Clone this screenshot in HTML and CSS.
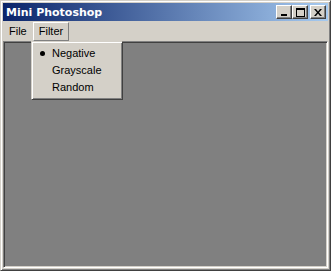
FILE: index.html
```html
<!DOCTYPE html>
<html>
<head>
  <meta charset="UTF-8">
  <title>Mini Photoshop</title>
  <link rel="stylesheet" href="styles.css">
</head>
<body>
  <div class="window">
    <div class="title-bar">
      <span class="title">Mini Photoshop</span>
      <div class="title-buttons">
        <button class="cap-btn min" aria-label="Minimize"><span class="min-bar"></span></button>
        <button class="cap-btn max" aria-label="Maximize"><span class="max-box"></span></button>
        <button class="cap-btn close" aria-label="Close">
          <svg width="8" height="7" viewBox="0 0 8 7"><path d="M0 0h2l2 2.5 2-2.5h2l-3 3.5 3 3.5h-2l-2-2.5-2 2.5h-2l3-3.5z" fill="#000"/></svg>
        </button>
      </div>
    </div>
    <div class="menu-bar">
      <span class="menu-item">File</span>
      <span class="menu-item open">Filter</span>
    </div>
    <div class="client"></div>
    <div class="dropdown">
      <div class="drop-item"><span class="bullet"></span>Negative</div>
      <div class="drop-item">Grayscale</div>
      <div class="drop-item">Random</div>
    </div>
  </div>
</body>
</html>
```

FILE: styles.css
```css
body {
  margin: 0;
  background: #d4d0c8;
  font-family: "Liberation Sans", Arial, sans-serif;
  font-size: 11px;
}
.window {
  position: relative;
  width: 331px;
  height: 271px;
  box-sizing: border-box;
  display: flex;
  flex-direction: column;
  background: #d4d0c8;
  border: 1px solid;
  border-color: #d4d0c8 #404040 #404040 #d4d0c8;
  box-shadow: inset 1px 1px 0 #fff, inset -1px -1px 0 #808080;
  padding: 2px;
}
.title-bar {
  height: 18px;
  display: flex;
  align-items: center;
  justify-content: space-between;
  background: linear-gradient(to right, #0a246a, #a6caf0);
  padding: 0 2px 0 3px;
}
.title {
  color: #fff;
  font-family: "DejaVu Sans", Verdana, sans-serif;
  font-weight: bold;
  font-size: 11px;
}
.title-buttons {
  display: flex;
}
.cap-btn {
  width: 16px;
  height: 14px;
  padding: 0;
  margin: 0;
  background: #d4d0c8;
  border: 1px solid;
  border-color: #fff #404040 #404040 #fff;
  box-shadow: inset -1px -1px 0 #808080;
  display: flex;
  align-items: center;
  justify-content: center;
  box-sizing: border-box;
}
.cap-btn.close {
  margin-left: 2px;
}
.min-bar {
  width: 6px;
  height: 2px;
  background: #000;
  margin-top: 6px;
  margin-right: 1px;
}
.max-box {
  width: 9px;
  height: 9px;
  box-sizing: border-box;
  border: 1px solid #000;
  border-top-width: 2px;
}
.menu-bar {
  height: 20px;
  display: flex;
  align-items: center;
}
.menu-item {
  padding: 2px 5px 3px;
  border: 1px solid transparent;
  color: #000;
}
.menu-item.open {
  border-color: #fff #808080 #808080 #fff;
}
.client {
  flex: 1;
  background: #808080;
  border: 1px solid;
  border-color: #808080 #fff #fff #808080;
  box-shadow: inset 1px 1px 0 #404040, inset -1px -1px 0 #d4d0c8;
}
.dropdown {
  position: absolute;
  left: 30px;
  top: 40px;
  width: 92px;
  box-sizing: border-box;
  background: #d4d0c8;
  border: 1px solid;
  border-color: #d4d0c8 #404040 #404040 #d4d0c8;
  box-shadow: inset 1px 1px 0 #fff, inset -1px -1px 0 #808080;
  padding: 3px 2px;
}
.drop-item {
  height: 17px;
  line-height: 17px;
  padding-left: 18px;
  position: relative;
  color: #000;
}
.bullet {
  position: absolute;
  left: 6px;
  top: 6px;
  width: 5px;
  height: 5px;
  border-radius: 50%;
  background: #000;
}
```
